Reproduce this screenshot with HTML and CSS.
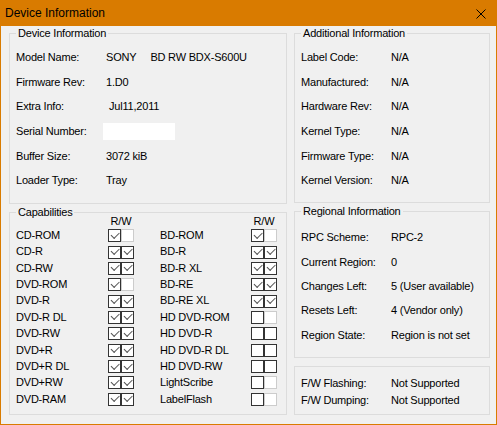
FILE: index.html
```html
<!DOCTYPE html>
<html lang="en">
<head>
    <meta charset="UTF-8">
    <title>Device Information</title>
    <link rel="stylesheet" href="styles.css">
</head>
<body>
    <div class="window">
        <div class="titlebar">
            <span class="title">Device Information</span>
            <svg class="close" width="10" height="10" viewBox="0 0 10 10">
                <path d="M0.5 0.5 L9.5 9.5 M9.5 0.5 L0.5 9.5" stroke="#000" stroke-width="1" fill="none"/>
            </svg>
        </div>
        <div class="client">
            <div class="column">
                <fieldset class="group device">
                    <legend>Device Information</legend>
                    <div class="row"><span class="label">Model Name:</span><span>SONY</span><span class="model">BD RW BDX-S600U</span></div>
                    <div class="row"><span class="label">Firmware Rev:</span><span>1.D0</span></div>
                    <div class="row"><span class="label">Extra Info:</span><span class="extra">Jul11,2011</span></div>
                    <div class="row"><span class="label">Serial Number:</span><span class="serial"></span></div>
                    <div class="row"><span class="label">Buffer Size:</span><span>3072 kiB</span></div>
                    <div class="row"><span class="label">Loader Type:</span><span>Tray</span></div>
                </fieldset>
                <fieldset class="group caps">
                    <legend>Capabilities</legend>
                    <div class="caps-grid">
                        <div class="caps-col">
                            <div class="caps-head"><span></span><span class="rw">R/W</span></div>
                            <div class="cap"><span>CD-ROM</span><span class="boxes"><i class="cb on"></i><i class="cb off"></i></span></div>
                            <div class="cap"><span>CD-R</span><span class="boxes"><i class="cb on"></i><i class="cb on"></i></span></div>
                            <div class="cap"><span>CD-RW</span><span class="boxes"><i class="cb on"></i><i class="cb on"></i></span></div>
                            <div class="cap"><span>DVD-ROM</span><span class="boxes"><i class="cb on"></i><i class="cb off"></i></span></div>
                            <div class="cap"><span>DVD-R</span><span class="boxes"><i class="cb on"></i><i class="cb on"></i></span></div>
                            <div class="cap"><span>DVD-R DL</span><span class="boxes"><i class="cb on"></i><i class="cb on"></i></span></div>
                            <div class="cap"><span>DVD-RW</span><span class="boxes"><i class="cb on"></i><i class="cb on"></i></span></div>
                            <div class="cap"><span>DVD+R</span><span class="boxes"><i class="cb on"></i><i class="cb on"></i></span></div>
                            <div class="cap"><span>DVD+R DL</span><span class="boxes"><i class="cb on"></i><i class="cb on"></i></span></div>
                            <div class="cap"><span>DVD+RW</span><span class="boxes"><i class="cb on"></i><i class="cb on"></i></span></div>
                            <div class="cap"><span>DVD-RAM</span><span class="boxes"><i class="cb on"></i><i class="cb on"></i></span></div>
                        </div>
                        <div class="caps-col right">
                            <div class="caps-head"><span></span><span class="rw">R/W</span></div>
                            <div class="cap"><span>BD-ROM</span><span class="boxes"><i class="cb on"></i><i class="cb off"></i></span></div>
                            <div class="cap"><span>BD-R</span><span class="boxes"><i class="cb on"></i><i class="cb on"></i></span></div>
                            <div class="cap"><span>BD-R XL</span><span class="boxes"><i class="cb on"></i><i class="cb on"></i></span></div>
                            <div class="cap"><span>BD-RE</span><span class="boxes"><i class="cb on"></i><i class="cb on"></i></span></div>
                            <div class="cap"><span>BD-RE XL</span><span class="boxes"><i class="cb on"></i><i class="cb on"></i></span></div>
                            <div class="cap"><span>HD DVD-ROM</span><span class="boxes"><i class="cb"></i><i class="cb off"></i></span></div>
                            <div class="cap"><span>HD DVD-R</span><span class="boxes"><i class="cb"></i><i class="cb"></i></span></div>
                            <div class="cap"><span>HD DVD-R DL</span><span class="boxes"><i class="cb"></i><i class="cb"></i></span></div>
                            <div class="cap"><span>HD DVD-RW</span><span class="boxes"><i class="cb"></i><i class="cb"></i></span></div>
                            <div class="cap"><span>LightScribe</span><span class="boxes"><i class="cb"></i><i class="cb off"></i></span></div>
                            <div class="cap"><span>LabelFlash</span><span class="boxes"><i class="cb"></i><i class="cb off"></i></span></div>
                        </div>
                    </div>
                </fieldset>
            </div>
            <div class="column">
                <fieldset class="group additional">
                    <legend>Additional Information</legend>
                    <div class="row"><span class="label">Label Code:</span><span>N/A</span></div>
                    <div class="row"><span class="label">Manufactured:</span><span>N/A</span></div>
                    <div class="row"><span class="label">Hardware Rev:</span><span>N/A</span></div>
                    <div class="row"><span class="label">Kernel Type:</span><span>N/A</span></div>
                    <div class="row"><span class="label">Firmware Type:</span><span>N/A</span></div>
                    <div class="row"><span class="label">Kernel Version:</span><span>N/A</span></div>
                </fieldset>
                <fieldset class="group regional">
                    <legend>Regional Information</legend>
                    <div class="row"><span class="label">RPC Scheme:</span><span>RPC-2</span></div>
                    <div class="row"><span class="label">Current Region:</span><span>0</span></div>
                    <div class="row"><span class="label">Changes Left:</span><span>5 (User available)</span></div>
                    <div class="row"><span class="label">Resets Left:</span><span>4 (Vendor only)</span></div>
                    <div class="row"><span class="label">Region State:</span><span>Region is not set</span></div>
                </fieldset>
                <div class="group firmware">
                    <div class="row"><span class="label">F/W Flashing:</span><span>Not Supported</span></div>
                    <div class="row"><span class="label">F/W Dumping:</span><span>Not Supported</span></div>
                </div>
            </div>
        </div>
    </div>
</body>
</html>
```

FILE: styles.css
```css
body, html {
    margin: 0;
    padding: 0;
    background-color: #f0f0f0;
    font-family: "Liberation Sans", Arial, sans-serif;
    color: #000;
}
.window {
    width: 497px;
    height: 425px;
    box-sizing: border-box;
    border: 1px solid #d97b00;
    border-top: none;
    background-color: #f0f0f0;
}
.titlebar {
    height: 26px;
    background-color: #d97b00;
    display: flex;
    align-items: center;
    justify-content: space-between;
    padding: 0 10px 0 4px;
    box-sizing: border-box;
}
.title {
    font-size: 12px;
    line-height: 14px;
    margin-top: -1px;
}
.close {
    display: block;
    margin-top: 1px;
}
.client {
    display: grid;
    grid-template-columns: 278px 196px;
    column-gap: 7px;
    padding: 0 6px 0 8px;
    font-size: 11px;
    letter-spacing: -0.2px;
}
.column {
    display: flex;
    flex-direction: column;
}
.group {
    margin: 0;
    padding: 0 6px;
    border: 1px solid #dcdcdc;
    box-sizing: border-box;
    min-width: 0;
}
.group legend {
    padding: 0 2px;
    line-height: 14px;
}
.row {
    display: flex;
    align-items: center;
    height: 24.6px;
    white-space: pre;
}
.label {
    width: 90px;
    flex-shrink: 0;
}
.device {
    height: 178px;
    padding-top: 5px;
}
.model {
    margin-left: 14px;
}
.extra {
    margin-left: 3px;
}
.serial {
    display: inline-block;
    width: 72px;
    height: 17px;
    background-color: #fff;
    margin-left: -3px;
}
.caps {
    height: 210px;
    margin-top: 1px;
}
.caps-grid {
    display: flex;
    gap: 26px;
    margin-top: -3px;
}
.caps-col {
    display: grid;
    grid-template-columns: 92px 26px;
}
.caps-col.right {
    grid-template-columns: 91px 26px;
}
.caps-head, .cap {
    display: contents;
}
.rw {
    line-height: 11px;
    height: 11px;
    text-align: center;
}
.cap span {
    height: 16.37px;
    line-height: 16.37px;
    white-space: nowrap;
}
.boxes {
    display: flex;
    align-items: center;
    padding-top: 1px;
    box-sizing: border-box;
}
.cb {
    display: block;
    width: 13px;
    height: 13px;
    box-sizing: border-box;
    border: 1px solid #333;
    background-color: #fff;
    position: relative;
}
.cb.off {
    border-color: #cccccc;
}
.cb.on::after {
    content: "";
    position: absolute;
    left: 2px;
    top: 1.5px;
    width: 7px;
    height: 3.5px;
    border-left: 1.3px solid #555;
    border-bottom: 1.3px solid #555;
    transform: rotate(-45deg);
}
.additional {
    height: 177px;
    padding-top: 5px;
}
.regional {
    height: 154px;
    margin-top: 1px;
    padding-top: 7px;
}
.regional .row {
    height: 24.4px;
}
.firmware {
    height: 49px;
    margin-top: 8px;
    padding-top: 8px;
}
.firmware .row {
    height: 16.4px;
}
```
